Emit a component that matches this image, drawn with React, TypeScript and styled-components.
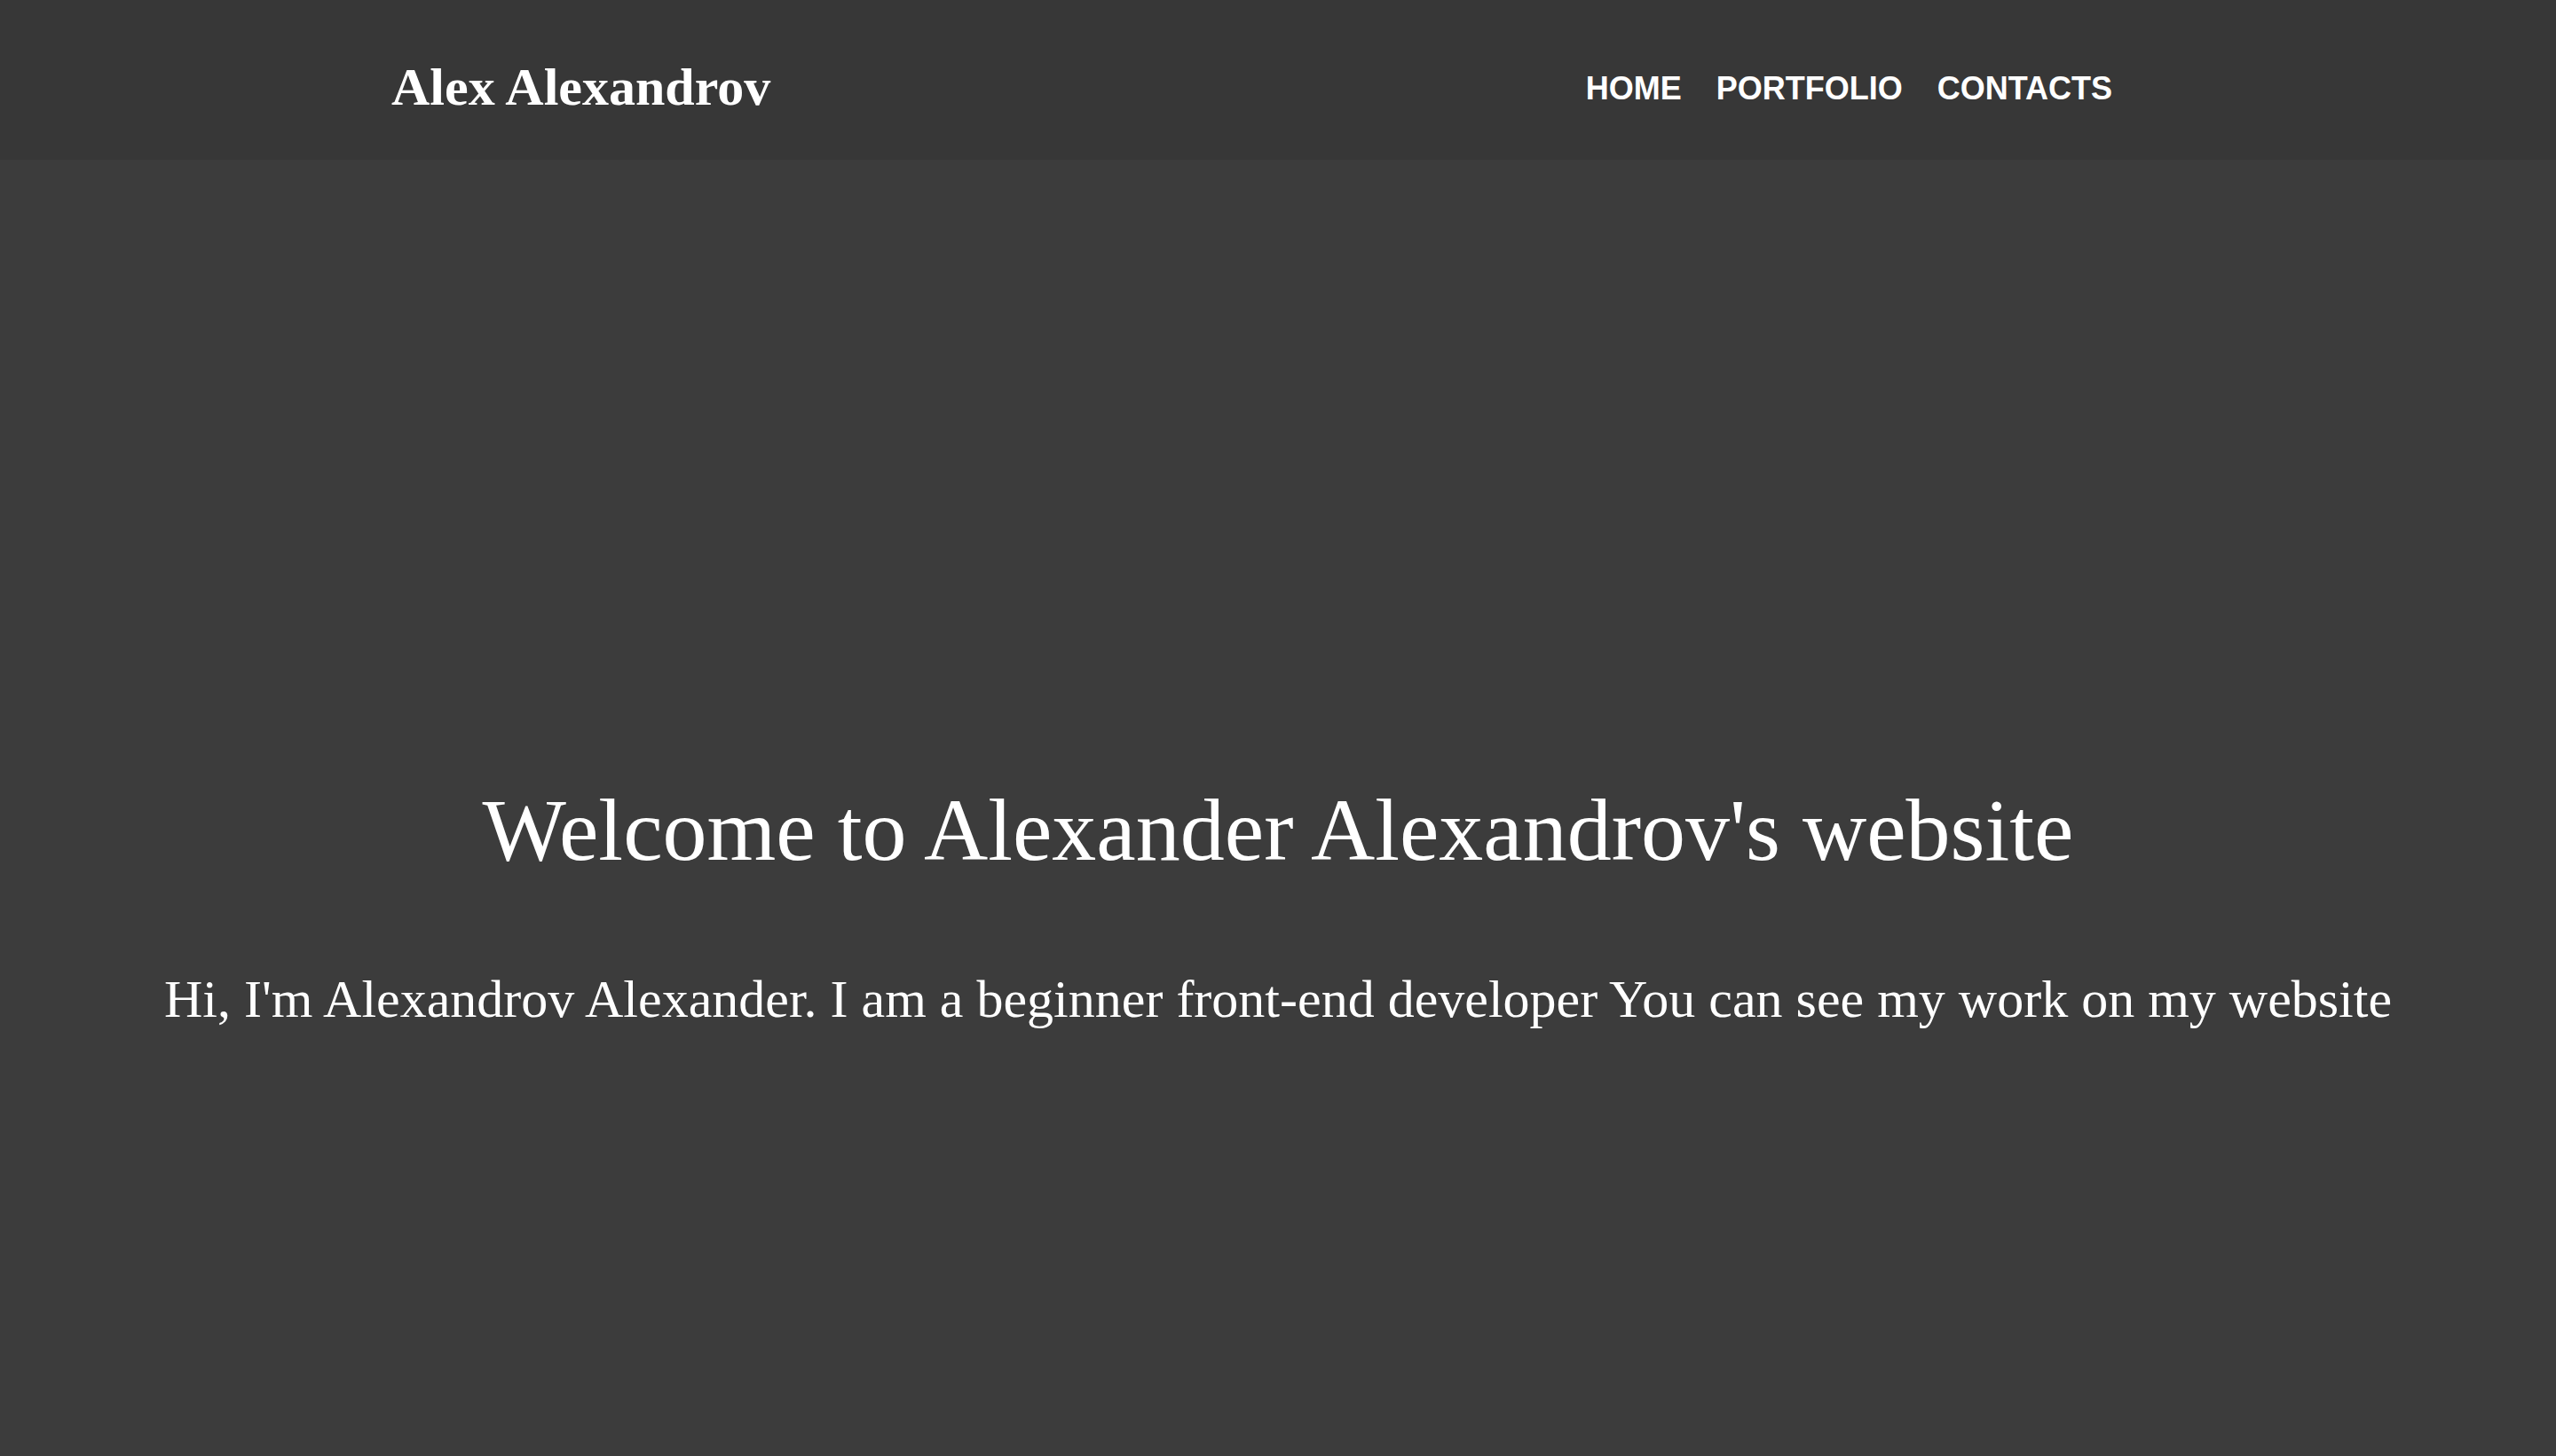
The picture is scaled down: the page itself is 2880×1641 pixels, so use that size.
import React from "react";
import styled, { createGlobalStyle } from "styled-components";

const GlobalStyle = createGlobalStyle`
  html, body {
    margin: 0;
    padding: 0;
    background: #3c3c3c;
    color: #ffffff;
    font-family: "Liberation Serif", "Times New Roman", serif;
  }
  * { box-sizing: border-box; }
`;

const Header = styled.header`
  height: 180px;
  background: #373737;
  display: flex;
  align-items: center;
  justify-content: space-between;
  padding: 20px 500px 0 441px;
`;

const Logo = styled.a`
  font-family: "Liberation Serif", "Times New Roman", serif;
  font-weight: 700;
  font-size: 60px;
  margin-bottom: 4px;
  color: #ffffff;
  text-decoration: none;
`;

const Nav = styled.nav`
  display: flex;
  gap: 39px;
`;

const NavLink = styled.a`
  font-family: "Liberation Sans", Arial, sans-serif;
  font-weight: 700;
  font-size: 36px;
  color: #ffffff;
  text-decoration: none;
  text-transform: uppercase;
`;

const Hero = styled.main`
  display: flex;
  flex-direction: column;
  align-items: center;
  padding-top: 698px;
  min-height: 1461px;
`;

const Title = styled.h1`
  margin: 0;
  font-weight: 400;
  font-size: 100px;
  text-align: center;
`;

const Intro = styled.p`
  margin: 99px 0 0;
  font-size: 60px;
  text-align: center;
`;

export default function App() {
  return (
    <>
      <GlobalStyle />
      <Header>
        <Logo href="#">Alex Alexandrov</Logo>
        <Nav>
          <NavLink href="#">Home</NavLink>
          <NavLink href="#">Portfolio</NavLink>
          <NavLink href="#">Contacts</NavLink>
        </Nav>
      </Header>
      <Hero>
        <Title>Welcome to Alexander Alexandrov's website</Title>
        <Intro>
          Hi, I'm Alexandrov Alexander. I am a beginner front-end developer You can see my work on my website
        </Intro>
      </Hero>
    </>
  );
}
